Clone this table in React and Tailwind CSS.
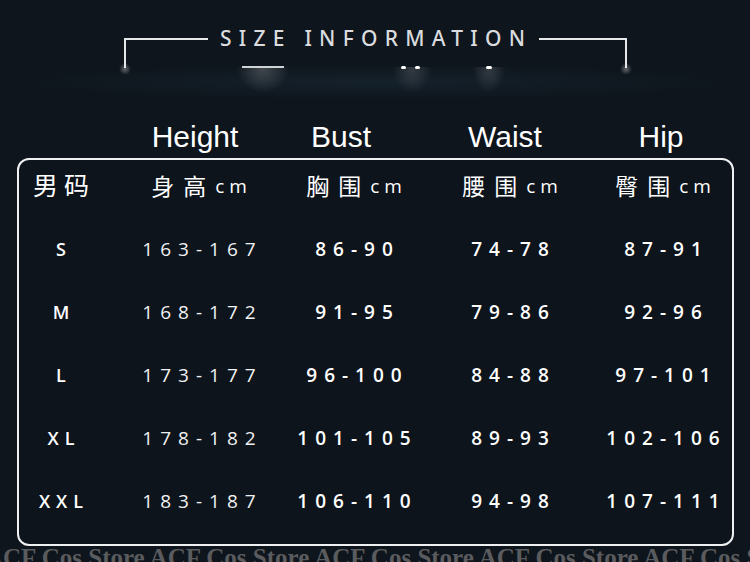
import React from "react";

const rows = [
  ["S", "163-167", "86-90", "74-78", "87-91"],
  ["M", "168-172", "91-95", "79-86", "92-96"],
  ["L", "173-177", "96-100", "84-88", "97-101"],
  ["XL", "178-182", "101-105", "89-93", "102-106"],
  ["XXL", "183-187", "106-110", "94-98", "107-111"],
];

const cols = "grid grid-cols-[84px_192px_118px_194px_112px]";
const cell = "flex justify-center items-center whitespace-nowrap";
const cjk = { fontFamily: '"Noto Sans CJK SC", "Noto Sans", sans-serif' };

function CnHead({ cn }) {
  return (
    <div className={cell}>
      <span className="text-[23px] tracking-[9px] text-white" style={cjk}>
        {cn}
      </span>
      <span className="text-[19px] tracking-[5px] text-white mr-[-5px] mt-[3px] font-['Open_Sans',sans-serif]">
        cm
      </span>
    </div>
  );
}

export default function App() {
  return (
    <div className="relative w-[750px] h-[562px] overflow-hidden bg-[#0e151c] font-['Open_Sans',sans-serif]">
      {/* stage lights under the title */}
      <div className="absolute left-[0px] top-[64px] w-[750px] h-[36px] bg-[radial-gradient(ellipse_at_center,rgba(35,60,78,0.3),transparent_70%)]" />
      <div className="absolute left-[236px] top-[67px] w-[54px] h-[26px] bg-[radial-gradient(ellipse_at_top,rgba(255,255,255,0.22),transparent_70%)]" />
      <div className="absolute left-[392px] top-[67px] w-[40px] h-[26px] bg-[radial-gradient(ellipse_at_top,rgba(255,255,255,0.16),transparent_70%)]" />
      <div className="absolute left-[472px] top-[67px] w-[34px] h-[26px] bg-[radial-gradient(ellipse_at_top,rgba(255,255,255,0.16),transparent_70%)]" />
      <div className="absolute left-[242px] top-[66px] w-[42px] h-[2px] bg-[#cfd3d6]" />
      <div className="absolute left-[401px] top-[66px] w-[5px] h-[3px] rounded-full bg-white" />
      <div className="absolute left-[415px] top-[66px] w-[5px] h-[3px] rounded-full bg-white" />
      <div className="absolute left-[486px] top-[66px] w-[6px] h-[3px] rounded-full bg-white" />
      <div className="absolute left-[118px] top-[64px] w-[14px] h-[10px] bg-[radial-gradient(circle,rgba(255,255,255,0.35),transparent_70%)]" />
      <div className="absolute left-[619px] top-[64px] w-[14px] h-[10px] bg-[radial-gradient(circle,rgba(255,255,255,0.35),transparent_70%)]" />

      {/* title */}
      <div className="relative h-[80px]">
        <div className="flex items-start ml-[124px] w-[503px] pt-[38px]">
          <div className="w-[84px] h-[30px] border-t-2 border-l-2 border-[#e6e7e8]" />
          <div className="ml-[12px] mr-[7px] -mt-[13px] leading-[26px] text-[21px] font-medium tracking-[0.345em] text-[#d9dbde] font-['Noto_Sans',sans-serif]">
            SIZE INFORMATION
          </div>
          <div className="flex-1 h-[30px] border-t-2 border-r-2 border-[#e6e7e8]" />
        </div>
      </div>

      {/* english headers */}
      <div className="mt-[40px] ml-[18px] h-[34px] grid grid-cols-[84px_186px_106px_222px_90px] text-white text-[30px] leading-[34px] font-['Liberation_Sans',Arial,sans-serif]">
        <div />
        <div className={cell}>Height</div>
        <div className={cell}>Bust</div>
        <div className={cell}>Waist</div>
        <div className={cell}>Hip</div>
      </div>

      {/* table */}
      <div className="mt-[4px] ml-[17px] w-[717px] h-[388px] border-2 border-[#eef0f2] rounded-[12px] bg-[#0d141b]">
        <div className={`${cols} h-[50px]`}>
          <div className={cell}>
            <span className="text-[25px] tracking-[6px] mr-[-6px] text-white" style={cjk}>
              男码
            </span>
          </div>
          <CnHead cn="身高" />
          <CnHead cn="胸围" />
          <CnHead cn="腰围" />
          <CnHead cn="臀围" />
        </div>
        <div className="mt-[8px]">
          {rows.map((r) => (
            <div key={r[0]} className={`${cols} h-[63px] text-white`}>
              <div className={cell}>
                <span className="text-[18px] font-semibold tracking-[6px] mr-[-6px]">{r[0]}</span>
              </div>
              <div className={cell}>
                <span className="text-[19px] font-medium tracking-[7px] mr-[-7px] text-[#f0f1f2]">{r[1]}</span>
              </div>
              {r.slice(2).map((v, i) => (
                <div key={i} className={cell}>
                  <span className="text-[19px] font-semibold tracking-[7px] mr-[-7px]">{v}</span>
                </div>
              ))}
            </div>
          ))}
        </div>
      </div>

      {/* watermark */}
      <div className="-mt-[1px] -ml-[15px] whitespace-nowrap text-[25px] leading-none font-bold text-[#5a5b5e] font-['Liberation_Serif',serif]">
        ACF Cos Store ACF Cos Store ACF Cos Store ACF Cos Store ACF Cos Store ACF Cos Store
      </div>
    </div>
  );
}
